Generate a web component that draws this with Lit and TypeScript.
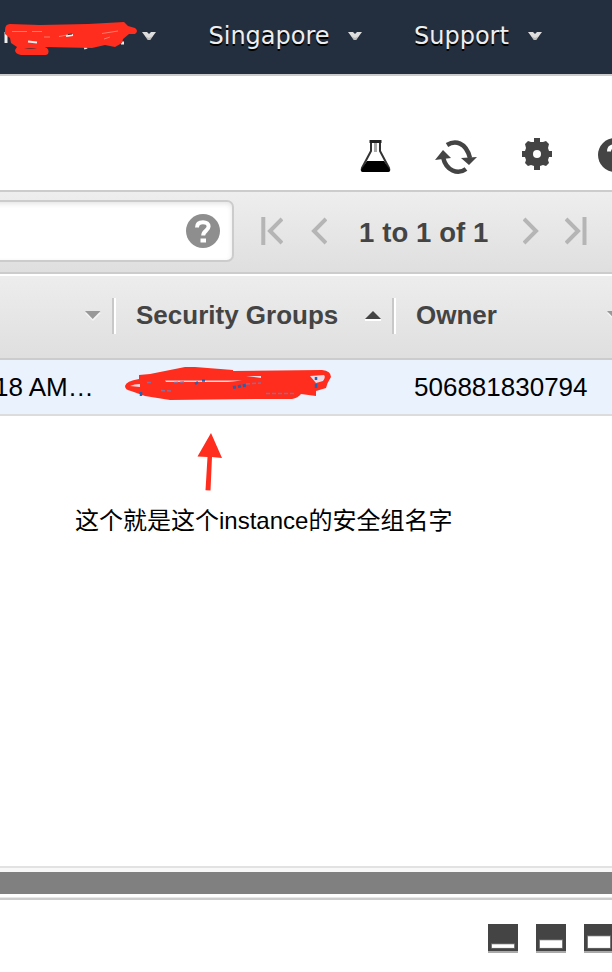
import { LitElement, html, css, svg } from "lit";
import { customElement } from "lit/decorators.js";

const caret = html`<svg class="caret" width="15" height="9" viewBox="0 0 15 9">
  <path d="M0 0H5L7 2L9 0H14L8 8H6Z" fill="#dedede"/>
  <path d="M3 4L6 8H8L11 4L7 6Z" fill="#bdbdbd"/>
</svg>`;

const sortDown = html`<svg class="sort" width="16" height="10" viewBox="0 0 16 10">
  <path d="M0 2H16L8 10Z" fill="#f5f5f5"/><path d="M0 0H15.5L7.7 8Z" fill="#999"/>
</svg>`;

const question = svg`<circle cx="17" cy="17" r="17"/>
  <path d="M11 13.5C11 9.5 13.5 8.2 17 8.2C20.5 8.2 22.6 10 22.6 12.6C22.6 16.8 17.2 16.4 17.2 21.5" fill="none" stroke="#fff" stroke-width="4"/>
  <rect x="14.5" y="24.5" width="5.5" height="4" fill="#fff"/>`;

const pane = (h: number) => html`<svg class="pane" width="30" height="29" viewBox="0 0 30 29">
  <rect width="30" height="29" fill="#aaa"/><rect width="30" height="27" fill="#444"/>
  <rect x="3" y=${24.5 - h} width="24" height=${h} fill="#777"/>
  <rect x="4" y=${23.7 - h + 1.6} width="22" height=${h - 1.4} fill="#fff"/>
</svg>`;

@customElement("app-root")
export class AppRoot extends LitElement {
  static styles = css`
    :host { display: block; width: 100%; height: 972px; overflow: hidden; background: #fff;
      font-family: "Liberation Sans", Arial, sans-serif; color: #444; }
    * { box-sizing: border-box; }
    svg { display: block; flex: none; }
    .nav, .tools, .filter, .head, .row, .foot { display: flex; white-space: nowrap; overflow: hidden; }
    .nav { height: 76px; background: #232f3e; border-bottom: 2px solid #ccc; color: #eee;
      font: 24px/28px "DejaVu Sans", Verdana, sans-serif; text-shadow: 0 2px 0 #000; padding-top: 21px; }
    .nav .caret { margin-top: 11px; }
    .nav span { padding-top: 1px; }
    .account { margin: 0 3px 0 3px; }
    .region { margin-left: 51.5px; width: 139.5px; }
    .support { margin-left: 51px; width: 114px; }
    .tools { height: 114px; }
    .flask { margin: 63px 0 0 360px; }
    .refresh { margin: 63px 0 0 44px; }
    .gear { margin: 61px 0 0 43px; }
    .help { margin: 62px 0 0 45px; fill: #444; }
    .filter { height: 84px; border: solid #ccc; border-width: 2px 0; background: linear-gradient(#eee, #dfdfdf); }
    .search { width: 244px; height: 62px; margin: 8px 0 0 -10px; flex: none; background: #fff; border: 2px solid #ccc;
      border-radius: 7px; box-shadow: inset 0 2px 5px #e5e5e5; padding: 12px 0 0 194px; fill: #8e8e8e; }
    .pager { fill: none; stroke: #b5b5b5; stroke-width: 4; margin-top: 25px; }
    .first { margin-left: 27px; }
    .prev { margin-left: 28px; }
    .next { margin-left: 34px; }
    .last { margin-left: 26px; }
    .count { width: 130px; margin: 26px 0 0 32px; font: bold 27.5px/30px "Liberation Sans", sans-serif; letter-spacing: .1px; }
    .head { height: 86px; border-top: 2px solid #fff; border-bottom: 2px solid #ccc;
      background: linear-gradient(#ededed, #dfdfdf); font-weight: bold; font-size: 26px; line-height: 30px; }
    .head .sort { margin-top: 35px; }
    .col0 { width: 85px; flex: none; }
    .rule { width: 4px; height: 36px; margin-top: 22px; border-left: 2px solid #c8c8c8; border-right: 2px solid #fff; flex: none; }
    .label { margin-top: 24px; flex: none; }
    .groups { margin-left: 20px; width: 229px; }
    .owner { margin-left: 20px; width: 191px; }
    .row { height: 56px; background: #eaf2fe; border-bottom: 2px solid #dcdcdc; color: #000; font-size: 26px; line-height: 30px; padding-top: 12px; }
    .launch { width: 126px; flex: none; margin-left: -6px; }
    .mark { margin-top: -5px; }
    .id { margin-left: 82px; }
    .note { height: 450px; color: #000; }
    .arrow { margin-left: 196px; padding-top: 16px; height: 90px; }
    .caption { margin-left: 75px; font: 24px/30px "Liberation Sans", "Noto Sans CJK SC", sans-serif; }
    .split { height: 34px; border-top: 2px solid #e2e2e2; background: linear-gradient(#f8f8f8 0 4px, #808080 4px 26px, #fff 26px 29px, #e8e8e8 29px 30px, #ccc 30px); }
    .foot { padding: 24px 0 0 488px; gap: 18px; height: 72px; }
  `;

  render() {
    return html`
      <nav class="nav">
        <svg class="account" width="136" height="40" viewBox="3 21 136 40">
          <path d="M6 32V43M121 43H124M84 48L87 47" stroke="#eee" stroke-width="3"/>
          <path d="M5 30Q5 24 10 24L40 25L88 24L124 22L128 26L135 28Q139 31 135 34L129 34L123 39L122 43L115 47L105 45L92 48L45 47Q50 49 48 54L46 55L21 55Q15 54 15 50L17 47L11 43L10 38L5 34Z" fill="#ff2d1d"/>
          <path d="M24 49Q31 47 37 49Z" fill="#732f30"/>
          <path d="M12 31.5H27M32 31.5H42M44 37H50M102 33.5L118 31M59 36.5L67 35M110 37L104 39" stroke="#ff9c8f" stroke-width=".7"/>
          <path d="M66 36L73 35M28 41.5L37 42.5" stroke="#eee" stroke-width="2"/>
          <path d="M68 34.5L72 34" stroke="#333" stroke-width="1"/>
        </svg>${caret}
        <span class="region">Singapore</span>${caret}
        <span class="support">Support</span>${caret}
      </nav>
      <div class="tools">
        <svg class="flask" width="31" height="34" viewBox="0 0 31 34">
          <path d="M11 3V12L2 29Q1 32 3 32H28Q30 32 29 29L20 12V3" fill="#fff" stroke="#333" stroke-width="2"/>
          <path d="M9.500 2.500H21.500" stroke="#222" stroke-width="3"/><path d="M15.500 4V13" stroke="#aaa" stroke-width="3"/>
          <path d="M7 22H24L30 31Q30 33 28 33H3Q1 33 1 31Z" fill="#000"/>
        </svg>
        <svg class="refresh" width="43" height="36" viewBox="0 0 43 36">
          <path d="M12 6C20 1 31 3 35 19M31 30C23 36 11 32 8 18" fill="none" stroke="#444" stroke-width="4.500"/>
          <path d="M26 19L42 18L34 26ZM0 21L16 19L8 11Z" fill="#444"/>
        </svg>
        <svg class="gear" width="32" height="34" viewBox="0 0 32 34">
          <path d="M13 1H19V5H22L25 4L28 7L27 11L28 14H31V20H28L27 23L28 26L25 29L22 28L19 29V33H13V29L10 28L7 29L4 26L5 23L4 20H1V14H4L5 11L4 7L7 4L10 5H13Z" fill="#444"/>
          <circle cx="16" cy="17" r="4" fill="#fff"/>
        </svg>
        <svg class="help" width="34" height="34" viewBox="0 0 34 34">${question}</svg>
      </div>
      <div class="filter">
        <div class="search"><svg width="34" height="34" viewBox="0 0 34 34">${question}</svg></div>
        <svg class="pager first" width="22" height="28" viewBox="0 0 22 28"><path d="M2.300 0V28M21 2L9 14L21 26"/></svg>
        <svg class="pager prev" width="16" height="28" viewBox="0 0 16 28"><path d="M15 2L3 14L15 26"/></svg>
        <span class="count">1 to 1 of 1</span>
        <svg class="pager next" width="16" height="28" viewBox="0 0 16 28"><path d="M1 2L13 14L1 26"/></svg>
        <svg class="pager last" width="22" height="28" viewBox="0 0 22 28"><path d="M19.500 0V28M1 2L13 14L1 26"/></svg>
      </div>
      <div class="head">
        <span class="col0"></span>${sortDown}<svg width="11" height="1"></svg><span class="rule"></span>
        <span class="label groups">Security Groups</span>
        <svg class="sort" width="16" height="10" viewBox="0 0 16 10"><path d="M0 8H16V10H0Z" fill="#fff"/><path d="M0 8L8 0L16 8Z" fill="#444"/></svg>
        <svg width="11" height="1"></svg><span class="rule"></span>
        <span class="label owner">Owner</span>${sortDown}
      </div>
      <div class="row">
        <span class="launch">18 AM…</span>
        <svg class="mark" width="212" height="40" viewBox="120 367 212 40">
          <path d="M125 386Q126 381 139 379V375L150 374L165 371L185 367L195 367L233 370V371L322 370Q331 371 331 377Q327 383 326 388L316 391V396L301 394Q298 398 292 399L260 399L170 400L145 396L131 391Q125 390 125 386Z" fill="#ff2d1d"/>
          <path d="M130 386Q134 384 140 384V387ZM165 380.500H242L228 382H166ZM246 376H261V378ZM310 376L324 375Q326 377 323 381L316 383Z" fill="#eed9e4"/>
          <path d="M147 382.500H153M174 382.500L186 382M246 384L261 383M266 393.500H294M161 390.500L173 391" fill="none" stroke="#8d6d9b" stroke-width="1.500" stroke-dasharray="4 2"/>
          <path d="M233 387.500L247 385" stroke="#315da4" stroke-width="3" stroke-dasharray="3 2"/>
          <path d="M141 392V396M316 377V380M316 384V388M195 384L198 382M202 380.500H205" stroke="#1768bd" stroke-width="2.500"/>
        </svg>
        <span class="id">506881830794</span>
      </div>
      <div class="note">
        <div class="arrow"><svg width="28" height="60" viewBox="0 0 28 60"><path d="M15 1L26 26L16 25L14.500 58.500L9.500 58.300L11.500 25L1.500 24.500Z" fill="#ff2d1d"/></svg></div>
        <div class="caption">这个就是这个instance的安全组名字</div>
      </div>
      <div class="split"></div>
      <div class="foot">${pane(5)}${pane(9)}${pane(13)}</div>
    `;
  }
}
